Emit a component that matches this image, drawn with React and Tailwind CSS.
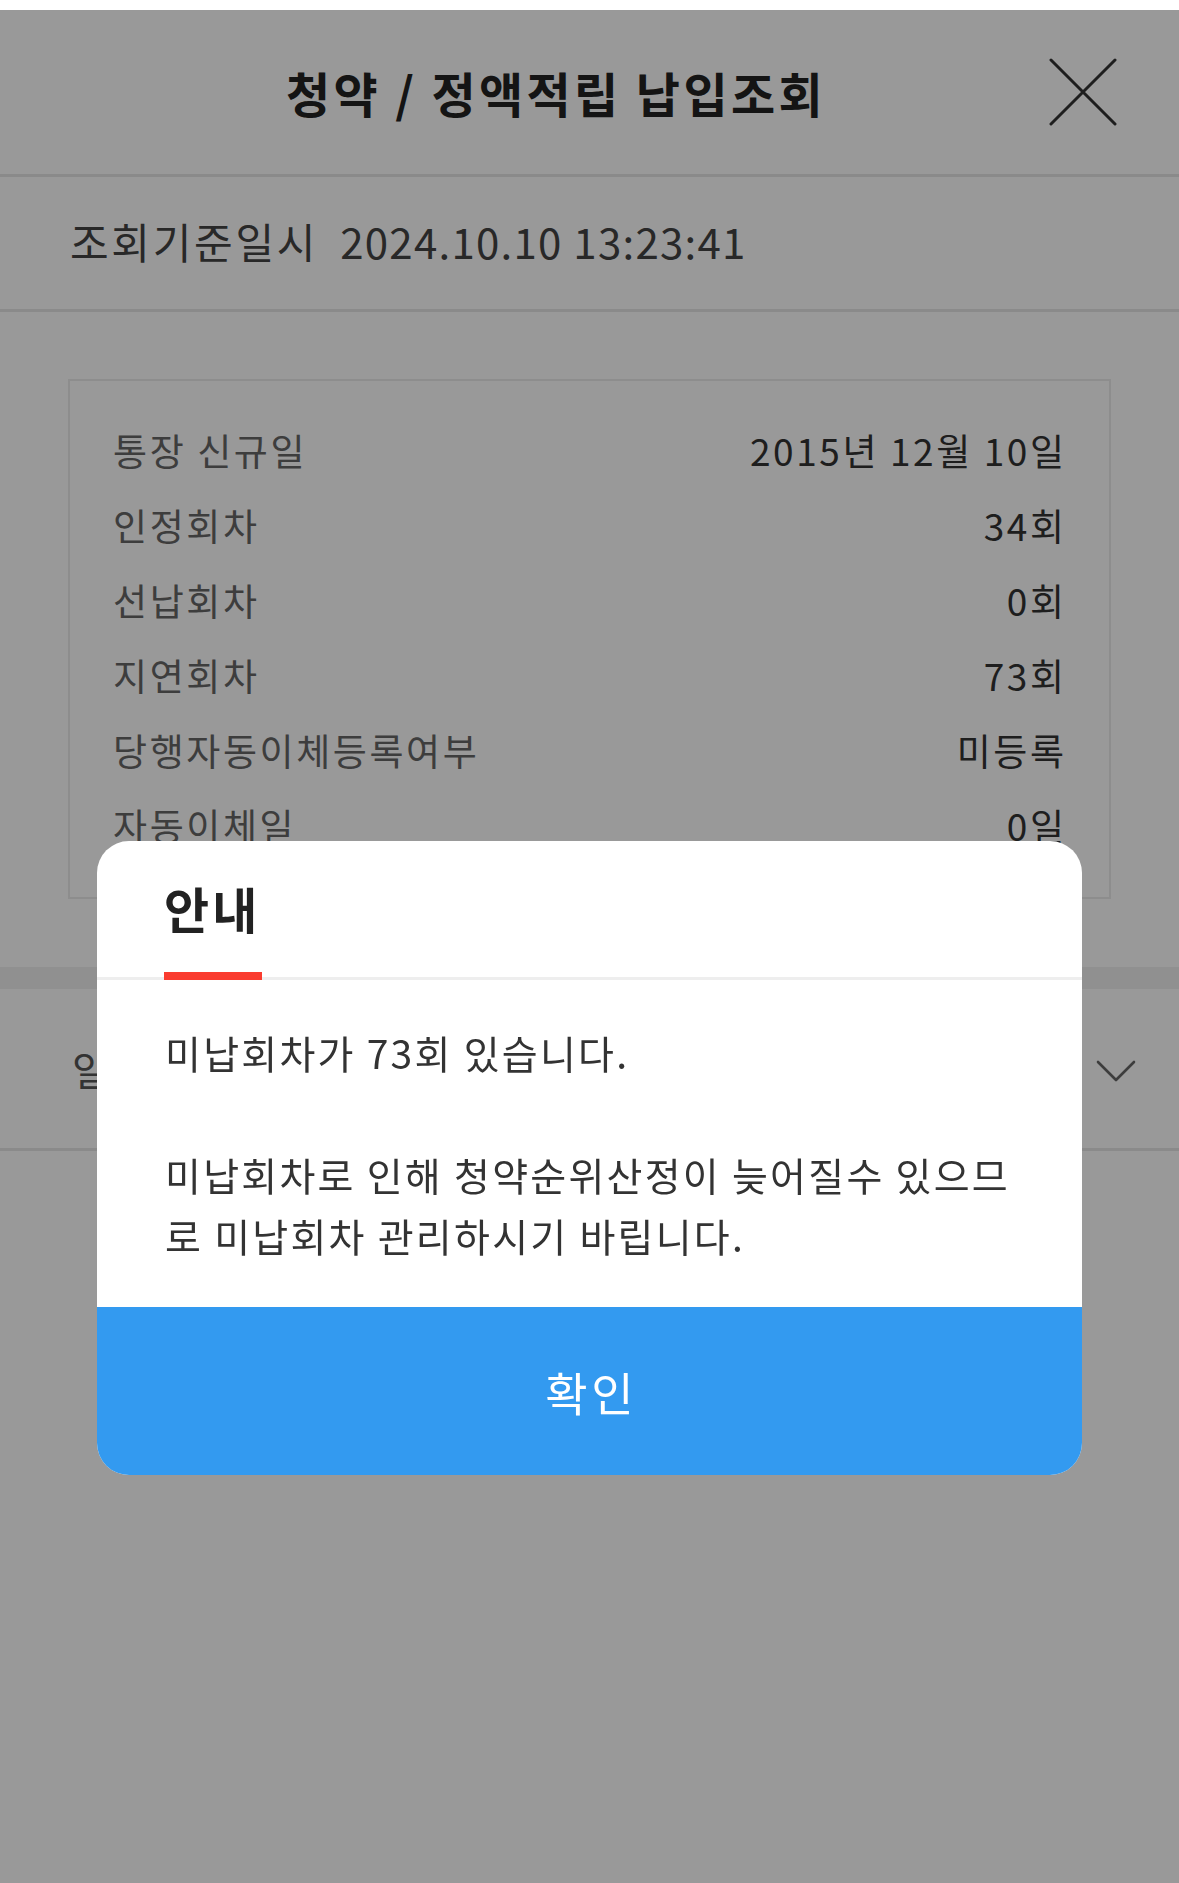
import React from "react";

const rows = [
  { label: "통장 신규일", value: "2015년 12월 10일" },
  { label: "인정회차", value: "34회" },
  { label: "선납회차", value: "0회" },
  { label: "지연회차", value: "73회" },
  { label: "당행자동이체등록여부", value: "미등록" },
  { label: "자동이체일", value: "0일" },
];

function CloseIcon() {
  return (
    <svg width="68" height="68" viewBox="0 0 68 68" fill="none">
      <path d="M2 2L66 66M66 2L2 66" stroke="#333" strokeWidth="3" strokeLinecap="round" />
    </svg>
  );
}

function ChevronDown() {
  return (
    <svg width="40" height="24" viewBox="0 0 40 24" fill="none">
      <path d="M2 3L20 21L38 3" stroke="#666" strokeWidth="2.6" strokeLinecap="round" strokeLinejoin="round" />
    </svg>
  );
}

export default function App() {
  return (
    <div className="relative min-h-screen bg-white font-['Noto_Sans_CJK_KR',sans-serif]">
      <div className="h-[10px]" />

      {/* page header */}
      <header className="relative flex h-[167px] items-center border-b-[3px] border-[#e6e6e6]">
        <h1 className="w-full pr-[67px] text-center text-[48px] font-bold leading-none tracking-[0.07em] text-[#222]">
          청약 / 정액적립 납입조회
        </h1>
        <button className="absolute right-[62px] top-[48px]">
          <CloseIcon />
        </button>
      </header>

      {/* lookup timestamp */}
      <div className="flex h-[135px] items-center gap-[22px] border-b-[3px] border-[#e6e6e6] px-[70px] pb-[5px] text-[42px] text-[#444]">
        <span className="tracking-[0.065em]">조회기준일시</span>
        <span className="tracking-[0.03em]">2024.10.10 13:23:41</span>
      </div>

      {/* account summary */}
      <section className="px-[68px] pb-[68px] pt-[67px]">
        <div className="border-2 border-[#ebebeb] pb-[34px] pl-[43px] pr-[45px] pt-[32px]">
          {rows.map((r) => (
            <div
              key={r.label}
              className="flex h-[75px] items-center justify-between text-[37px] tracking-[0.07em]"
            >
              <span className="text-[#666]">{r.label}</span>
              <span className="mr-[-0.07em] text-[#333]">{r.value}</span>
            </div>
          ))}
        </div>
      </section>

      <div className="h-[22px] bg-[#f0f0f0]" />

      <div className="flex h-[162px] items-center justify-between border-b-[3px] border-[#e6e6e6] pl-[72px] pr-[43px]">
        <span className="text-[40px] tracking-[0.05em] text-[#555]">일자별 납입내역</span>
        <div className="pt-[4px]">
          <ChevronDown />
        </div>
      </div>

      {/* dim layer + notice dialog */}
      <div className="fixed inset-x-0 bottom-0 top-[10px] flex justify-center bg-black/40 pt-[831px]">
        <div className="h-fit w-[985px] overflow-hidden rounded-[32px] bg-white">
          <div className="border-b-[3px] border-[#eeeeee] px-[67px] pt-[37px]">
            <div className="inline-flex flex-col">
              <h2 className="text-[49px] font-bold leading-[60px] tracking-[0.065em] text-[#222]">안내</h2>
              <div className="mb-[-3px] mt-[34px] h-[8px] w-[98px] bg-[#fa3c2f]" />
            </div>
          </div>
          <div className="pb-[41px] pl-[68px] pr-[40px] pt-[42px] text-[39px] leading-[61px] tracking-[0.058em] text-[#333]">
            <p>미납회차가 73회 있습니다.</p>
            <br />
            <p>
              미납회차로 인해 청약순위산정이 늦어질수 있으므
              <br />
              로 미납회차 관리하시기 바립니다.
            </p>
          </div>
          <button className="flex h-[168px] w-full items-center justify-center bg-[#339af0] pl-[0.08em] text-[46px] tracking-[0.08em] text-white">
            확인
          </button>
        </div>
      </div>
    </div>
  );
}
